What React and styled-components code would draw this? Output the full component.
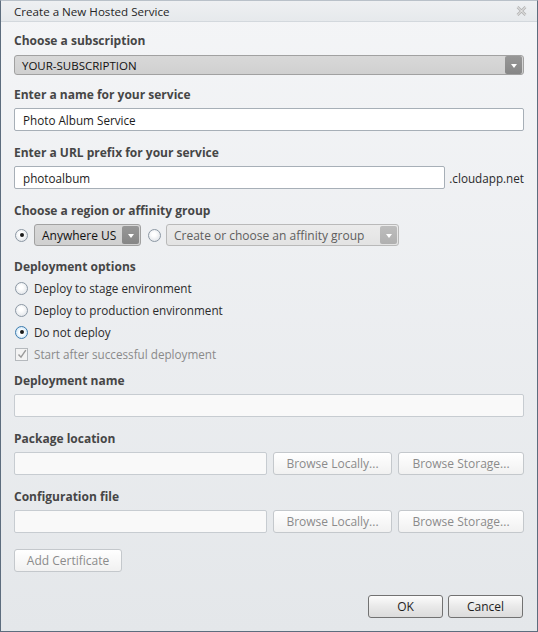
import React from "react";
import styled, { createGlobalStyle, css } from "styled-components";

const Global = createGlobalStyle`
  html, body { margin: 0; padding: 0; background: #ffffff; }
  body { font-family: "Open Sans", "Noto Sans", sans-serif; font-size: 11.7px; }
  * { box-sizing: border-box; }
`;

const Window = styled.div`
  width: 538px;
  height: 632px;
  display: flex;
  flex-direction: column;
  border: 1px solid #5d6d7e;
  border-top-color: #b9c1c9;
  background: linear-gradient(#f4f5f7, #e4e7ea);
`;

const TitleBar = styled.div`
  height: 21px;
  flex: none;
  display: flex;
  align-items: center;
  justify-content: space-between;
  padding: 0 10px 0 13px;
  background: linear-gradient(#eef0f2, #e6e9ec);
  border-bottom: 1px solid #d3d8dd;
  color: #262626;
  font-size: 11.6px;
`;

const CloseIcon = () => (
  <svg width="11" height="10" viewBox="0 0 11 10">
    <path d="M1.5 1 L9.5 9 M9.5 1 L1.5 9" stroke="#b3b3b3" strokeWidth="2.6" fill="none" />
    <path d="M1.5 1 L9.5 9 M9.5 1 L1.5 9" stroke="#f1f1f1" strokeWidth="1" fill="none" />
  </svg>
);

const Body = styled.div`
  flex: 1;
  display: flex;
  flex-direction: column;
  padding: 11px 13px 13px 13px;
`;

const Section = styled.div`
  display: flex;
  flex-direction: column;
  margin-top: ${(p) => p.$top || 0}px;
`;

const Label = styled.div`
  font-weight: 700;
  font-size: 12px;
  color: #464646;
  line-height: 16px;
  margin-bottom: ${(p) => (p.$mb ?? 5)}px;
`;

const Input = styled.div`
  height: 23px;
  flex: ${(p) => (p.$grow ? 1 : "none")};
  display: flex;
  align-items: center;
  padding-left: 8px;
  border: 1px solid ${(p) => (p.$disabled ? "#c7ccd1" : "#a7afb7")};
  border-radius: 2px;
  background: ${(p) => (p.$disabled ? "#f9f9f9" : "#ffffff")};
  color: #1c1c1c;
`;

const Row = styled.div`
  display: flex;
  align-items: center;
  gap: ${(p) => p.$gap ?? 6}px;
`;

const Suffix = styled.span`
  color: #2a2a2a;
`;

const Select = styled.div`
  height: ${(p) => p.$h || 22}px;
  width: ${(p) => (p.$w ? `${p.$w}px` : "auto")};
  flex: ${(p) => (p.$w ? "none" : 1)};
  display: flex;
  align-items: center;
  justify-content: space-between;
  padding: 0 1px 0 ${(p) => p.$pl ?? 7}px;
  border: 1px solid ${(p) => (p.$disabled ? "#b9b9b9" : "#a1a1a1")};
  border-radius: 3px;
  background: ${(p) =>
    p.$disabled ? "linear-gradient(#ebebeb, #e3e3e3)" : "linear-gradient(#d8d8d8, #d0d0d0)"};
  color: ${(p) => (p.$disabled ? "#5e5e5e" : "#111111")};
  font-size: ${(p) => (p.$fs || 12)}px;
`;

const Arrow = styled.div`
  width: 17px;
  height: 18px;
  border-radius: 2px;
  display: flex;
  align-items: center;
  justify-content: center;
  background: ${(p) =>
    p.$disabled ? "linear-gradient(#bdbdbd, #b0b0b0)" : "linear-gradient(#979797, #868686)"};
  &::after {
    content: "";
    border-left: 3.5px solid transparent;
    border-right: 3.5px solid transparent;
    border-top: 4px solid #ffffff;
    margin-top: 1px;
  }
`;

const Radio = styled.span`
  width: 13px;
  height: 13px;
  flex: none;
  border-radius: 50%;
  border: 1px solid ${(p) => (p.$focus ? "#3d7bad" : "#8c98a4")};
  background: ${(p) =>
    p.$focus
      ? "radial-gradient(circle at 50% 50%, #ffffff 30%, #cfe6f7 75%)"
      : "radial-gradient(circle at 45% 40%, #ffffff 20%, #dde1e6 90%)"};
  display: inline-flex;
  align-items: center;
  justify-content: center;
  ${(p) =>
    p.$checked &&
    css`
      &::after {
        content: "";
        width: 4px;
        height: 4px;
        border-radius: 50%;
        background: #1a1a1a;
      }
    `}
`;

const Option = styled.div`
  height: 22px;
  display: flex;
  align-items: center;
  gap: 6px;
  padding-left: 1px;
  color: ${(p) => (p.$disabled ? "#8a8a8a" : "#2b2b2b")};
`;

const Check = styled.span`
  width: 13px;
  height: 13px;
  flex: none;
  border: 1px solid #b5b9bd;
  background: #f3f3f3;
  display: inline-flex;
  align-items: center;
  justify-content: center;
`;

const Button = styled.button`
  height: 23px;
  width: ${(p) => p.$w}px;
  flex: none;
  font-family: inherit;
  font-size: 12px;
  padding: 0;
  border-radius: 3px;
  border: 1px solid ${(p) => (p.$primary ? "#727272" : "#c4c8cc")};
  background: ${(p) =>
    p.$primary ? "linear-gradient(#fcfcfc, #e9e9e9 50%, #dcdcdc)" : "linear-gradient(#ffffff, #f1f1f1)"};
  color: ${(p) => (p.$primary ? "#1e1e1e" : "#8b8b8b")};
`;

const Footer = styled.div`
  margin-top: auto;
  display: flex;
  justify-content: flex-end;
  gap: 5px;
  padding-right: 1px;
`;

export default function App() {
  return (
    <>
      <Global />
      <Window>
        <TitleBar>
          <span>Create a New Hosted Service</span>
          <CloseIcon />
        </TitleBar>
        <Body>
          <Section>
            <Label $mb={6}>Choose a subscription</Label>
            <Select $h={22} $fs={11.5}>
              <span>YOUR-SUBSCRIPTION</span>
              <Arrow />
            </Select>
          </Section>

          <Section $top={12}>
            <Label>Enter a name for your service</Label>
            <Input>Photo Album Service</Input>
          </Section>

          <Section $top={14}>
            <Label>Enter a URL prefix for your service</Label>
            <Row $gap={4}>
              <Input $grow>photoalbum</Input>
              <Suffix>.cloudapp.net</Suffix>
            </Row>
          </Section>

          <Section $top={14}>
            <Label>Choose a region or affinity group</Label>
            <Row $gap={0}>
              <Radio $checked style={{ marginLeft: 1 }} />
              <Select $w={107} style={{ marginLeft: 6 }}>
                <span>Anywhere US</span>
                <Arrow />
              </Select>
              <Radio style={{ marginLeft: 7 }} />
              <Select $w={233} $disabled style={{ marginLeft: 5 }}>
                <span>Create or choose an affinity group</span>
                <Arrow $disabled />
              </Select>
            </Row>
          </Section>

          <Section $top={13}>
            <Label $mb={2}>Deployment options</Label>
            <Option>
              <Radio />
              Deploy to stage environment
            </Option>
            <Option>
              <Radio />
              Deploy to production environment
            </Option>
            <Option>
              <Radio $checked $focus />
              Do not deploy
            </Option>
            <Option $disabled>
              <Check>
                <svg width="10" height="10" viewBox="0 0 10 10">
                  <path d="M1.5 5.5 L4 8.2 L8.8 1.2" stroke="#9a9a9a" strokeWidth="1.4" fill="none" />
                </svg>
              </Check>
              Start after successful deployment
            </Option>
          </Section>

          <Section $top={8}>
            <Label>Deployment name</Label>
            <Input $disabled />
          </Section>

          <Section $top={14}>
            <Label>Package location</Label>
            <Row>
              <Input $grow $disabled />
              <Button $w={119} disabled>Browse Locally...</Button>
              <Button $w={126} disabled>Browse Storage...</Button>
            </Row>
          </Section>

          <Section $top={14}>
            <Label>Configuration file</Label>
            <Row>
              <Input $grow $disabled />
              <Button $w={119} disabled>Browse Locally...</Button>
              <Button $w={126} disabled>Browse Storage...</Button>
            </Row>
          </Section>

          <Section $top={16}>
            <Row>
              <Button $w={108} disabled>Add Certificate</Button>
            </Row>
          </Section>

          <Footer>
            <Button $primary $w={75}>OK</Button>
            <Button $primary $w={75}>Cancel</Button>
          </Footer>
        </Body>
      </Window>
    </>
  );
}
